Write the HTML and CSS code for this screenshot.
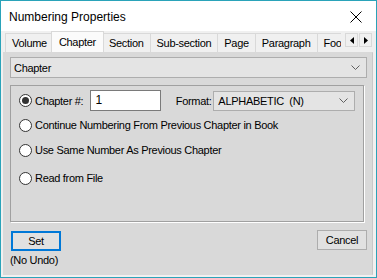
FILE: index.html
```html
<!DOCTYPE html>
<html>
<head>
<meta charset="utf-8">
<link rel="stylesheet" href="styles.css">
</head>
<body>
<div class="window">
  <div class="titlebar">
    <span class="title">Numbering Properties</span>
    <svg class="close" width="12" height="12" viewBox="0 0 12 12"><path d="M0.5 0.5 L11.5 11.5 M11.5 0.5 L0.5 11.5" stroke="#000" stroke-width="1" fill="none"/></svg>
  </div>
  <div class="client">
    <div class="tabbar">
      <div class="tabs">
        <div class="tab">Volume</div>
        <div class="tab selected">Chapter</div>
        <div class="tab">Section</div>
        <div class="tab">Sub-section</div>
        <div class="tab">Page</div>
        <div class="tab">Paragraph</div>
        <div class="tab">Footnote</div>
      </div>
      <div class="scrollbtns">
        <div class="sbtn"><svg width="4" height="7" viewBox="0 0 4 7"><path d="M4 0 L0 3.5 L4 7 Z" fill="#000"/></svg></div>
        <div class="sbtn"><svg width="4" height="7" viewBox="0 0 4 7"><path d="M0 0 L4 3.5 L0 7 Z" fill="#000"/></svg></div>
      </div>
    </div>
    <div class="page">
      <div class="combo">
        <span>Chapter</span>
        <svg class="chev" width="9" height="5" viewBox="0 0 9 5"><path d="M0.5 0.5 L4.5 4.5 L8.5 0.5" stroke="#606060" fill="none"/></svg>
      </div>
      <div class="group">
        <div class="opt first">
          <span class="radio checked"></span>
          <span class="lbl chap">Chapter #:</span>
          <span class="input">1</span>
          <span class="lbl fmt">Format:</span>
          <span class="select">
            <span>ALPHABETIC&nbsp; (N)</span>
            <svg class="chev" width="9" height="5" viewBox="0 0 9 5"><path d="M0.5 0.5 L4.5 4.5 L8.5 0.5" stroke="#606060" fill="none"/></svg>
          </span>
        </div>
        <div class="opt second"><span class="radio"></span><span class="lbl">Continue Numbering From Previous Chapter in Book</span></div>
        <div class="opt third"><span class="radio"></span><span class="lbl">Use Same Number As Previous Chapter</span></div>
        <div class="opt fourth"><span class="radio"></span><span class="lbl">Read from File</span></div>
      </div>
      <div class="footer">
        <div class="left">
          <div class="btn default">Set</div>
          <div class="note">(No Undo)</div>
        </div>
        <div class="btn cancel">Cancel</div>
      </div>
    </div>
  </div>
</div>
</body>
</html>
```
FILE: styles.css
```css
* { box-sizing: border-box; }
html, body { margin: 0; padding: 0; }
body {
  font-family: "Liberation Sans", Arial, sans-serif;
  font-size: 11px;
  letter-spacing: -0.3px;
  color: #000;
  background: #fff;
}
.window {
  width: 377px;
  height: 278px;
  border: 1px solid #2aa3b9;
  display: flex;
  flex-direction: column;
  background: #f0f0f0;
}
.titlebar {
  height: 30px;
  flex: none;
  background: #fff;
  display: flex;
  align-items: center;
  justify-content: space-between;
  padding: 0 14px 0 8px;
}
.title {
  font-size: 12px;
  letter-spacing: 0;
  margin-top: 1px;
}
.close { display: block; margin-top: 1px; }
.client {
  flex: 1;
  display: flex;
  flex-direction: column;
  padding: 0 3px 2px 2px;
}
.tabbar {
  height: 21px;
  flex: none;
  display: flex;
  position: relative;
  z-index: 1;
}
.tabs {
  display: flex;
  width: 338px;
  overflow: hidden;
  align-items: flex-end;
  padding-left: 2px;
}
.tab {
  flex: none;
  height: 19px;
  line-height: 18px;
  padding: 0 6px;
  border: 1px solid #d9d9d9;
  border-bottom: none;
  background: #f0f0f0;
  margin-right: -1px;
  white-space: nowrap;
}
.tab.selected {
  height: 22px;
  line-height: 20px;
  background: #fbfbfb;
  border-color: #d9d9d9;
  margin: 0 -2px -1px -2px;
  padding: 0 7px;
  position: relative;
  z-index: 2;
}
.scrollbtns {
  display: flex;
  margin-top: 2px;
  margin-left: 4px;
  gap: 1px;
}
.sbtn {
  width: 13px;
  height: 14px;
  border: 1px solid #d9d9d9;
  background: #f0f0f0;
  display: flex;
  align-items: center;
  justify-content: center;
}
.sbtn svg { display: block; }
.page {
  flex: 1;
  border: 1px solid #d9d9d9;
  border-right-color: #c8c8c8;
  background: #d9d9d9;
  padding: 4px 5px 0 6px;
  display: flex;
  flex-direction: column;
}
.combo {
  height: 21px;
  border: 1px solid #adadad;
  background: #e4e4e4;
  display: flex;
  align-items: center;
  justify-content: space-between;
  padding: 0 6px 0 3px;
}
.chev { display: block; }
.group {
  margin-top: 7px;
  margin-right: 3px;
  height: 137px;
  border: 1px solid #a0a0a0;
  box-shadow: 1px 1px 0 #fff;
  padding: 4px 8px 0 8px;
  display: flex;
  flex-direction: column;
}
.opt {
  display: flex;
  align-items: center;
  height: 14px;
}
.opt.first { height: 21px; }
.opt.second { margin-top: 7px; }
.opt.third { margin-top: 11px; }
.opt.fourth { margin-top: 14px; }
.radio {
  flex: none;
  width: 13px;
  height: 13px;
  border-radius: 50%;
  border: 1px solid #333;
  background: #fff;
  margin-right: 3px;
  display: flex;
  align-items: center;
  justify-content: center;
}
.radio.checked::after {
  content: "";
  width: 7px;
  height: 7px;
  border-radius: 50%;
  background: #333;
}
.lbl { white-space: nowrap; }
.lbl.chap { width: 56px; }
.input {
  width: 71px;
  height: 21px;
  background: #fff;
  border: 1px solid #7a7a7a;
  padding: 0 0 0 4px;
  line-height: 18px;
  font-size: 12px;
}
.lbl.fmt { margin-left: 15px; width: 38px; }
.select {
  width: 143px;
  height: 20px;
  border: 1px solid #adadad;
  background: #e4e4e4;
  display: flex;
  align-items: center;
  justify-content: space-between;
  padding: 0 6px 0 4px;
}
.footer {
  margin-top: 8px;
  display: flex;
  justify-content: space-between;
  align-items: flex-start;
  padding: 0 0 0 1px;
}
.left { display: flex; flex-direction: column; }
.btn {
  width: 50px;
  height: 20px;
  background: #e1e1e1;
  border: 1px solid #adadad;
  display: flex;
  align-items: center;
  justify-content: center;
}
.btn.default {
  width: 50px;
  border: 2px solid #0078d7;
  margin-top: 1px;
}
.btn.cancel { margin-right: 0; margin-top: 0; }
.note { margin-top: 3px; margin-left: -1px; }
```
